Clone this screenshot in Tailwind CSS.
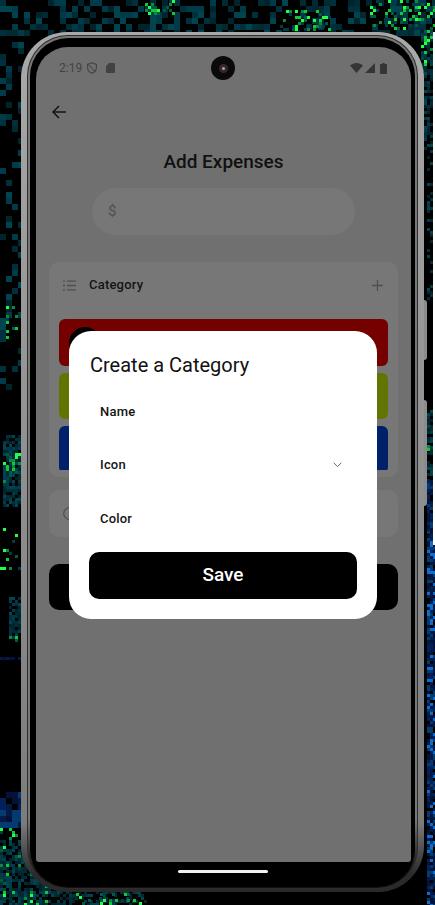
<!DOCTYPE html>
<html lang="en">
<head>
  <meta charset="UTF-8" />
  <meta name="viewport" content="width=device-width, initial-scale=1.0"/>
  <title>Add Expenses</title>
  <script src="https://cdn.jsdelivr.net/npm/@tailwindcss/browser@4"></script>
</head>
<body class="bg-black w-[435px] h-[905px] overflow-hidden relative font-['Roboto',sans-serif]">
  <!-- pixel wallpaper, filled in by the script below -->
  <svg id="wallpaper" class="absolute inset-0" width="435" height="905" shape-rendering="crispEdges"></svg>
  <div class="absolute right-0 top-[32px] w-[2px] h-[513px] bg-white"></div>

  <!-- side buttons -->
  <div class="absolute left-[424px] top-[300px] w-[3px] h-[60px] rounded-r-sm bg-[#8c8c8c]"></div>
  <div class="absolute left-[424px] top-[400px] w-[3px] h-[106px] rounded-r-sm bg-[#8c8c8c]"></div>

  <!-- phone -->
  <div class="absolute left-[21px] top-[32px] w-[403px] h-[860px] rounded-[46px] bg-gradient-to-b from-[#a8a8a8] from-2% via-[#7c7c7c] via-92% to-[#2a2a2a] to-98% px-[6px] pt-[3px] pb-[3px]">
    <div class="h-full rounded-[41px] bg-[#2e2e2e] p-px">
      <div class="h-full rounded-[40px] bg-gradient-to-b from-[#777] via-[#777] via-92% to-[#111] to-98% px-[2px] pt-[2px] pb-[1px]">
        <div class="h-full rounded-[38px] bg-black pl-[6px] pr-[6px] pt-[9px] flex flex-col">

          <!-- screen -->
          <div class="relative w-[375px] h-[815px] bg-[#707070] rounded-t-[32px] rounded-b-[3px] shrink-0">
            <!-- status bar -->
            <div class="h-[42px] pl-[23px] pr-[24px] flex items-center justify-between relative">
              <div class="flex items-center text-[#424242] text-[12px]">
                <span>2:19</span>
                <svg class="ml-[5px]" width="10" height="12" viewBox="0 0 10 12" fill="none" stroke="#424242" stroke-width="1.1"><path d="M5 0.8 L9.4 2.4 V5.6 C9.4 8.4 7.6 10.4 5 11.3 C2.4 10.4 0.6 8.4 0.6 5.6 V2.4 Z"/><path d="M2 3 L8 9.5"/></svg>
                <svg class="ml-[9px]" width="9" height="10" viewBox="0 0 9 10" fill="#424242"><path d="M3 0 H8 A1 1 0 0 1 9 1 V9 A1 1 0 0 1 8 10 H1 A1 1 0 0 1 0 9 V3 Z"/></svg>
              </div>
              <div class="absolute left-[175px] top-[9px] w-[24px] h-[24px] rounded-full bg-[#0a0a0a] flex items-center justify-center">
                <div class="w-[9px] h-[9px] rounded-full bg-[#33282e] flex items-center justify-center"><div class="w-[3px] h-[3px] rounded-full bg-[#b89ab0]"></div></div>
              </div>
              <div class="flex items-center gap-[2px]">
                <svg width="13" height="10" viewBox="0 0 13 10" fill="#353535"><path d="M0 2.6 C3.6 -0.8 9.4 -0.8 13 2.6 L6.5 10 Z"/></svg>
                <svg width="10" height="10" viewBox="0 0 10 10" fill="#353535"><path d="M10 0 V10 H0 Z"/></svg>
                <svg class="ml-[3px]" width="7" height="11" viewBox="0 0 7 11" fill="#353535"><path d="M2.3 0 H4.7 V1 H6.2 A0.8 0.8 0 0 1 7 1.8 V10.2 A0.8 0.8 0 0 1 6.2 11 H0.8 A0.8 0.8 0 0 1 0 10.2 V1.8 A0.8 0.8 0 0 1 0.8 1 H2.3 Z"/></svg>
              </div>
            </div>

            <!-- back arrow -->
            <div class="mt-[11px] h-[24px] pl-[15px] flex items-center">
              <svg width="16" height="16" viewBox="0 0 16 16" fill="none" stroke="#0c0c0c" stroke-width="1.4"><path d="M15 8 H2"/><path d="M8 2 L2 8 L8 14"/></svg>
            </div>

            <h1 class="mt-[24px] h-[28px] leading-[28px] text-center text-[19px] font-medium text-[#111]">Add Expenses</h1>

            <!-- amount -->
            <div class="mt-[12px] mx-auto w-[263px] h-[47px] rounded-full bg-[#777] pl-[16px] flex items-center text-[15px] font-medium text-[#555]">$</div>

            <!-- category card -->
            <div class="mt-[27px] mx-[13px] h-[215px] rounded-[10px] bg-[#777]">
              <div class="h-[46px] pl-[14px] pr-[15px] flex items-center">
                <svg width="13" height="11" viewBox="0 0 13 11" fill="none" stroke="#4f4f4f" stroke-width="1.3"><path d="M0 1.2 H2 M0 5.5 H2 M0 9.8 H2 M4 1.2 H13 M4 5.5 H13 M4 9.8 H13"/></svg>
                <span class="ml-[13px] text-[13px] font-medium tracking-[0.2px] text-[#141414]">Category</span>
                <svg class="ml-auto" width="11" height="11" viewBox="0 0 11 11" fill="none" stroke="#4f4f4f" stroke-width="1.3"><path d="M5.5 0 V11 M0 5.5 H11"/></svg>
              </div>
              <div class="mt-[11px] mx-[10px] h-[151px] overflow-hidden flex flex-col gap-[7px]">
                <div class="relative h-[47px] shrink-0 rounded-[6px] bg-[#740000]">
                  <div class="absolute left-[10px] top-[8px] w-[32px] h-[32px] rounded-full bg-black"></div>
                </div>
                <div class="h-[46px] shrink-0 rounded-[6px] bg-[#637400]"></div>
                <div class="h-[47px] shrink-0 rounded-[6px] bg-[#00206a]"></div>
              </div>
            </div>

            <!-- date card -->
            <div class="mt-[13px] mx-[13px] h-[47px] rounded-[10px] bg-[#777] pl-[14px] flex items-center">
              <svg width="13" height="13" viewBox="0 0 13 13" fill="none" stroke="#4f4f4f" stroke-width="1.2"><circle cx="6.5" cy="6.5" r="5.8"/></svg>
            </div>

            <div class="mt-[27px] mx-[13px] h-[46px] rounded-[10px] bg-black"></div>

            <!-- dialog -->
            <div class="absolute left-[33px] top-[284px] w-[308px] h-[288px] rounded-[22px] bg-white pl-[20px] pr-[20px]">
              <h2 class="pt-[20px] pl-px h-[48px] leading-[28px] text-[20px] text-[#111]">Create a Category</h2>
              <div class="pl-[11px] mt-[21px] h-[24px] flex items-center text-[13px] font-medium tracking-[0.2px] text-[#141414]">Name</div>
              <div class="pl-[11px] pr-[15px] mt-[29px] h-[24px] flex items-center justify-between text-[13px] font-medium tracking-[0.2px] text-[#141414]">
                <span>Icon</span>
                <svg width="9" height="6" viewBox="0 0 9 6" fill="none" stroke="#666" stroke-width="1"><path d="M0.7 0.8 L4.5 4.6 L8.3 0.8"/></svg>
              </div>
              <div class="pl-[11px] mt-[30px] h-[24px] flex items-center text-[13px] font-medium tracking-[0.2px] text-[#141414]">Color</div>
              <button class="mt-[21px] w-[268px] h-[47px] rounded-[10px] bg-black text-white text-[19px] font-medium">Save</button>
            </div>
          </div>

          <div class="mt-[8px] mx-auto w-[90px] h-[3px] rounded-full bg-[#f2f2f2]"></div>
        </div>
      </div>
    </div>
  </div>

  <script>
    // seeded noise so the wallpaper stays the same on every load
    let seed = 41;
    function rnd() {
      seed = (seed * 16807) % 2147483647;
      return seed / 2147483647;
    }

    const teal = ['#003b4a', '#00303c', '#012a33', '#01242c', '#00444f'];
    const green = ['#22ff44', '#12c83a', '#0a8a3c', '#005a46', '#003b4a'];
    const navy = ['#02205a', '#031a45', '#021238', '#033a70'];
    const blue = ['#02205a', '#031a45', '#021238', '#033a70', '#0a6fd0'];

    // x, y, w, h, palette, density, cell size (bigger cells read as blocks, like the reference)
    const patches = [
      [0, 0, 435, 31, teal, 0.45, 6],
      [145, 0, 30, 15, green, 0.3, 3],
      [280, 10, 50, 20, green, 0.3, 3],
      [370, 0, 65, 30, green, 0.3, 3],
      [421, 30, 12, 120, teal, 0.6, 3],
      [421, 30, 12, 35, green, 0.3, 3],
      [427, 150, 6, 150, teal, 0.3, 3],
      [427, 410, 6, 70, teal, 0.7, 3],
      [427, 445, 3, 24, green, 0.4, 3],
      [427, 480, 8, 60, navy, 0.9, 3],
      [427, 535, 8, 370, blue, 0.9, 3],
      [0, 30, 21, 120, teal, 0.3, 6],
      [0, 150, 21, 240, teal, 0.2, 6],
      [3, 306, 18, 36, green, 0.15, 3],
      [3, 435, 18, 72, teal, 0.8, 3],
      [3, 447, 18, 36, green, 0.25, 3],
      [0, 528, 21, 42, green, 0.12, 3],
      [9, 597, 12, 42, teal, 0.8, 3],
      [6, 636, 15, 9, green, 0.5, 3],
      [0, 657, 21, 3, navy, 0.9, 3],
      [0, 792, 21, 36, navy, 0.9, 6],
      [0, 828, 21, 77, green, 0.3, 3],
      [21, 870, 30, 35, green, 0.3, 3],
      [0, 840, 45, 65, teal, 0.6, 3],
      [45, 888, 100, 17, teal, 0.4, 3],
      [70, 893, 70, 12, green, 0.2, 3]
    ];

    const svg = document.getElementById('wallpaper');
    let rects = '';
    patches.forEach(([px, py, pw, ph, palette, density, cell]) => {
      for (let y = py; y < py + ph; y += cell) {
        for (let x = px; x < px + pw; x += cell) {
          if (rnd() < density) {
            const c = palette[Math.floor(rnd() * palette.length)];
            rects += `<rect x="${x}" y="${y}" width="${cell}" height="${cell}" fill="${c}"/>`;
          }
        }
      }
    });
    svg.innerHTML = rects;
  </script>
</body>
</html>
